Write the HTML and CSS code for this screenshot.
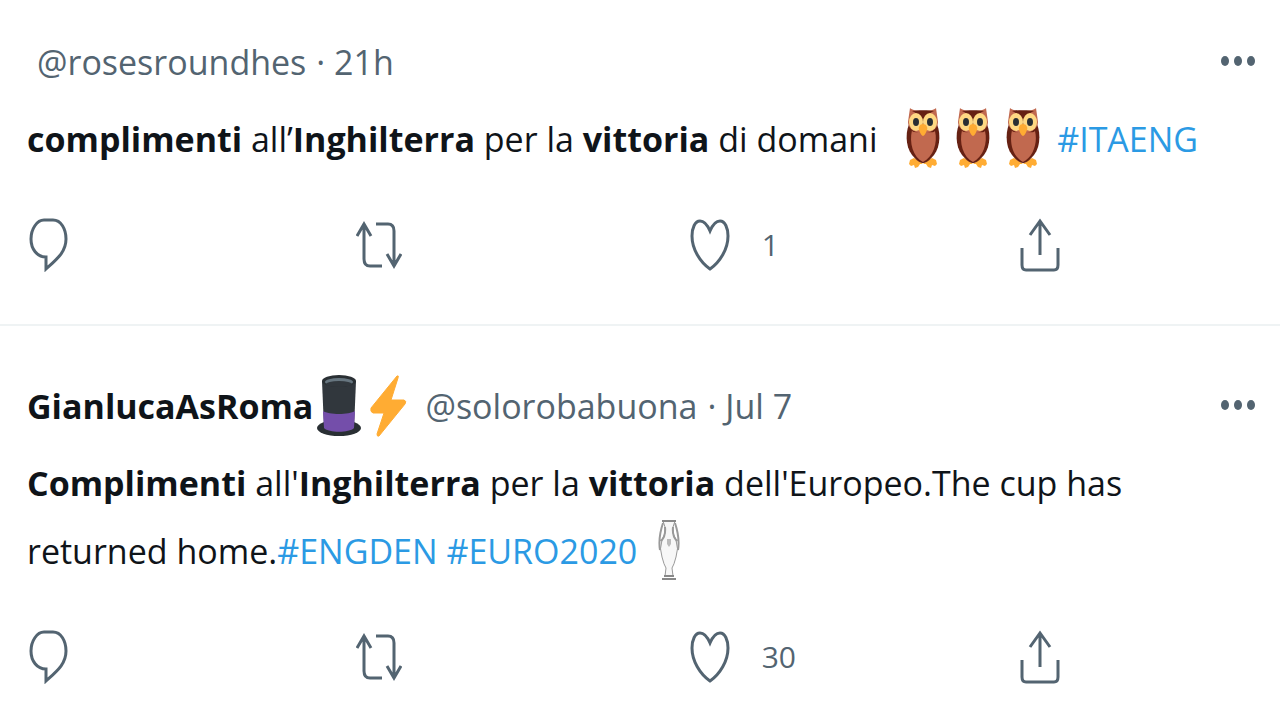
FILE: index.html
```
<!DOCTYPE html>
<html lang="it">
<head>
  <meta charset="UTF-8">
  <meta name="viewport" content="width=device-width, initial-scale=1.0">
  <title>Tweets</title>
  <link rel="stylesheet" href="styles.css">
</head>
<body>
  <svg class="sprite" aria-hidden="true">
    <symbol id="reply" viewBox="0 0 40 54">
      <path d="M15 2H24C32 2 37 11 37 21C37 34 28 41 17 51V39C8 39 2 31 2 21C2 11 8 2 15 2Z"/>
    </symbol>
    <symbol id="retweet" viewBox="0 0 46 54">
      <path d="M1 18L8 6L15 18M8 7V41Q8 48 14 48H26M20 6H32Q38 6 38 13V47M31 36L38 48L45 36"/>
    </symbol>
    <symbol id="like" viewBox="0 0 40 54">
      <path d="M20 13C17 6 14 3 10 3C5 3 2 10 2 18C2 31 10 44 20 51C30 44 38 31 38 18C38 10 35 3 30 3C26 3 23 6 20 13Z"/>
    </symbol>
    <symbol id="share" viewBox="0 0 40 54">
      <path d="M20 3V37M10 17L20 3L30 17M2 30V47Q2 52 6 52H34Q38 52 38 47V30"/>
    </symbol>
    <symbol id="more" viewBox="0 0 36 12">
      <ellipse cx="5" cy="5" rx="4" ry="5"/>
      <ellipse cx="18" cy="5" rx="4" ry="5"/>
      <ellipse cx="31" cy="5" rx="4" ry="5"/>
    </symbol>
    <symbol id="owl" viewBox="0 0 42 62">
      <path fill="#ffac33" d="M8 53L12 51L17 54L21 57L25 54L30 51L34 53L35 57L33 59L30 58L29 61L26 60L24 57H18L16 60L13 61L12 58L9 59L7 57Z"/>
      <path fill="#662113" d="M9 13C3 23 3 39 10 48C15 54 18 56 21 56S27 54 32 48C39 39 39 23 33 13Z"/>
      <path fill="#c1694f" d="M8 1C10 3 14 4 21 4S32 3 34 1L36 15C36 20 32 25 21 27C10 25 6 20 6 15Z"/>
      <path fill="#662113" d="M10 4C15 3 27 3 32 4C26 6 23 12 21 20C19 12 16 6 10 4Z"/>
      <path fill="#c1694f" d="M10 23C10 26 14 25 21 25S32 26 33 24C36 36 31 50 21 55C11 50 7 36 10 23Z"/>
      <ellipse cx="14" cy="15" rx="7" ry="9" fill="#ffd983"/>
      <ellipse cx="28" cy="15" rx="7" ry="9" fill="#ffd983"/>
      <ellipse cx="14" cy="15" rx="3" ry="4" fill="#292f33"/>
      <ellipse cx="28" cy="15" rx="3" ry="4" fill="#292f33"/>
      <path fill="#ffac33" d="M21 17C24 17 26 20 25 23C24 26 22 29 21 29S18 26 17 23C16 20 18 17 21 17Z"/>
    </symbol>
    <symbol id="hat" viewBox="0 0 44 62">
      <ellipse cx="22" cy="53" rx="22" ry="8" fill="#292f33"/>
      <path fill="#31373d" d="M5 6H39L37 53C34 58 10 58 7 53Z"/>
      <path fill="#744eaa" d="M6 36C12 40 32 40 38 36L37 53C32 58 12 58 7 53Z"/>
      <ellipse cx="22" cy="6" rx="17" ry="6" fill="#292f33"/>
      <ellipse cx="22" cy="7" rx="14" ry="4" fill="#66757f"/>
      <ellipse cx="22" cy="9" rx="13" ry="3" fill="#31373d"/>
    </symbol>
    <symbol id="bolt" viewBox="0 0 38 62">
      <path fill="#ffac33" stroke="#ffac33" stroke-linejoin="round" d="M28 1L2 33Q1 37 4 38H15L8 59Q8 62 10 61L36 29Q38 26 35 25H22L29 3Q30 0 28 1Z"/>
    </symbol>
    <symbol id="cup" viewBox="0 0 22 62">
      <path fill="#f7f7f7" stroke="#999" d="M5 2H17L15 8Q14 15 18 21Q21 30 18 38Q16 46 14 49L15 57H7L8 49Q6 46 4 38Q1 30 4 21Q8 15 7 8Z"/>
      <path fill="none" stroke="#999" stroke-width="2" d="M5 4Q0 19 2 31M17 4Q22 19 20 31M7 8Q8 17 3 22M15 8Q14 17 19 22"/>
      <path fill="none" stroke="#888" stroke-width="2" d="M4 2H18M4 60H18M6 57H16"/>
      <path fill="#bbb" d="M9 20H13V25L11 28L9 25Z"/>
    </symbol>
  </svg>

  <main class="timeline">
    <article class="tweet">
      <header class="tweet-header">
        <a class="handle" href="#">@rosesroundhes</a>
        <span class="time">· 21h</span>
        <button class="more" aria-label="More"><svg><use href="#more"/></svg></button>
      </header>
      <p class="tweet-text"><b>complimenti</b> all’<b>Inghilterra</b> per la <b>vittoria</b> di domani <span class="owls"><svg class="emoji"><use href="#owl"/></svg><svg class="emoji"><use href="#owl"/></svg><svg class="emoji"><use href="#owl"/></svg></span> <a href="#">#ITAENG</a></p>
      <div class="actions">
        <button aria-label="Reply"><svg><use href="#reply"/></svg></button>
        <button aria-label="Retweet"><svg class="wide"><use href="#retweet"/></svg></button>
        <button aria-label="Like"><svg><use href="#like"/></svg><span>1</span></button>
        <button aria-label="Share"><svg><use href="#share"/></svg></button>
      </div>
    </article>

    <article class="tweet">
      <header class="tweet-header">
        <b class="name">GianlucaAsRoma</b>
        <svg class="emoji hat"><use href="#hat"/></svg>
        <svg class="emoji bolt"><use href="#bolt"/></svg>
        <a class="handle" href="#">@solorobabuona</a>
        <span class="time">· Jul 7</span>
        <button class="more" aria-label="More"><svg><use href="#more"/></svg></button>
      </header>
      <p class="tweet-text"><b>Complimenti</b> all'<b>Inghilterra</b> per la <b>vittoria</b> dell'Europeo.The cup has returned home.<a href="#">#ENGDEN</a> <a href="#">#EURO2020</a> <svg class="emoji cup"><use href="#cup"/></svg></p>
      <div class="actions">
        <button aria-label="Reply"><svg><use href="#reply"/></svg></button>
        <button aria-label="Retweet"><svg class="wide"><use href="#retweet"/></svg></button>
        <button aria-label="Like"><svg><use href="#like"/></svg><span>30</span></button>
        <button aria-label="Share"><svg><use href="#share"/></svg></button>
      </div>
    </article>
  </main>
</body>
</html>
```
FILE: styles.css
```
body {
  margin: 0;
  background: #fff;
  color: #0f1419;
  font-family: "Open Sans", "Noto Sans", sans-serif;
  font-size: 34px;
  line-height: 68px;
}

.sprite {
  position: absolute;
  width: 0;
  height: 0;
}

a {
  color: #2b9ae4;
  text-decoration: none;
}

button {
  display: flex;
  align-items: center;
  padding: 0;
  border: none;
  background: none;
  color: #536471;
  font: inherit;
  cursor: pointer;
}

.tweet {
  padding: 46px 24px 36px 27px;
}

.tweet:first-child {
  padding: 28px 24px 52px 27px;
  border-bottom: 2px solid #eff3f4;
}

.tweet-header {
  display: flex;
  align-items: center;
  height: 68px;
  white-space: nowrap;
}

.tweet:first-child .handle {
  margin-left: 10px;
}

.handle,
.time {
  color: #536471;
}

.time {
  margin-left: 10px;
}

.more {
  margin-left: auto;
}

.more svg {
  width: 36px;
  height: 12px;
  fill: #536471;
}

.tweet-text {
  margin: 9px 0 0;
}

.emoji {
  width: 42px;
  height: 62px;
  margin: 0 4px;
  vertical-align: -17px;
}

.owls {
  margin-left: 12px;
  white-space: nowrap;
}

.hat {
  width: 44px;
  margin: 0 4px;
}

.bolt {
  width: 38px;
  margin: 0 18px 0 4px;
}

.cup {
  width: 22px;
  margin: 0 12px;
}

.actions {
  display: grid;
  grid-template-columns: 1fr 1fr 1fr 236px;
  margin-top: 45px;
  padding-left: 2px;
}

.actions svg {
  width: 40px;
  height: 54px;
  fill: none;
  stroke: #536471;
  stroke-width: 3;
}

.actions .wide {
  width: 46px;
  margin: 0 -3px;
}

.actions span {
  margin-left: 32px;
  font-size: 30px;
  line-height: 54px;
}
```
